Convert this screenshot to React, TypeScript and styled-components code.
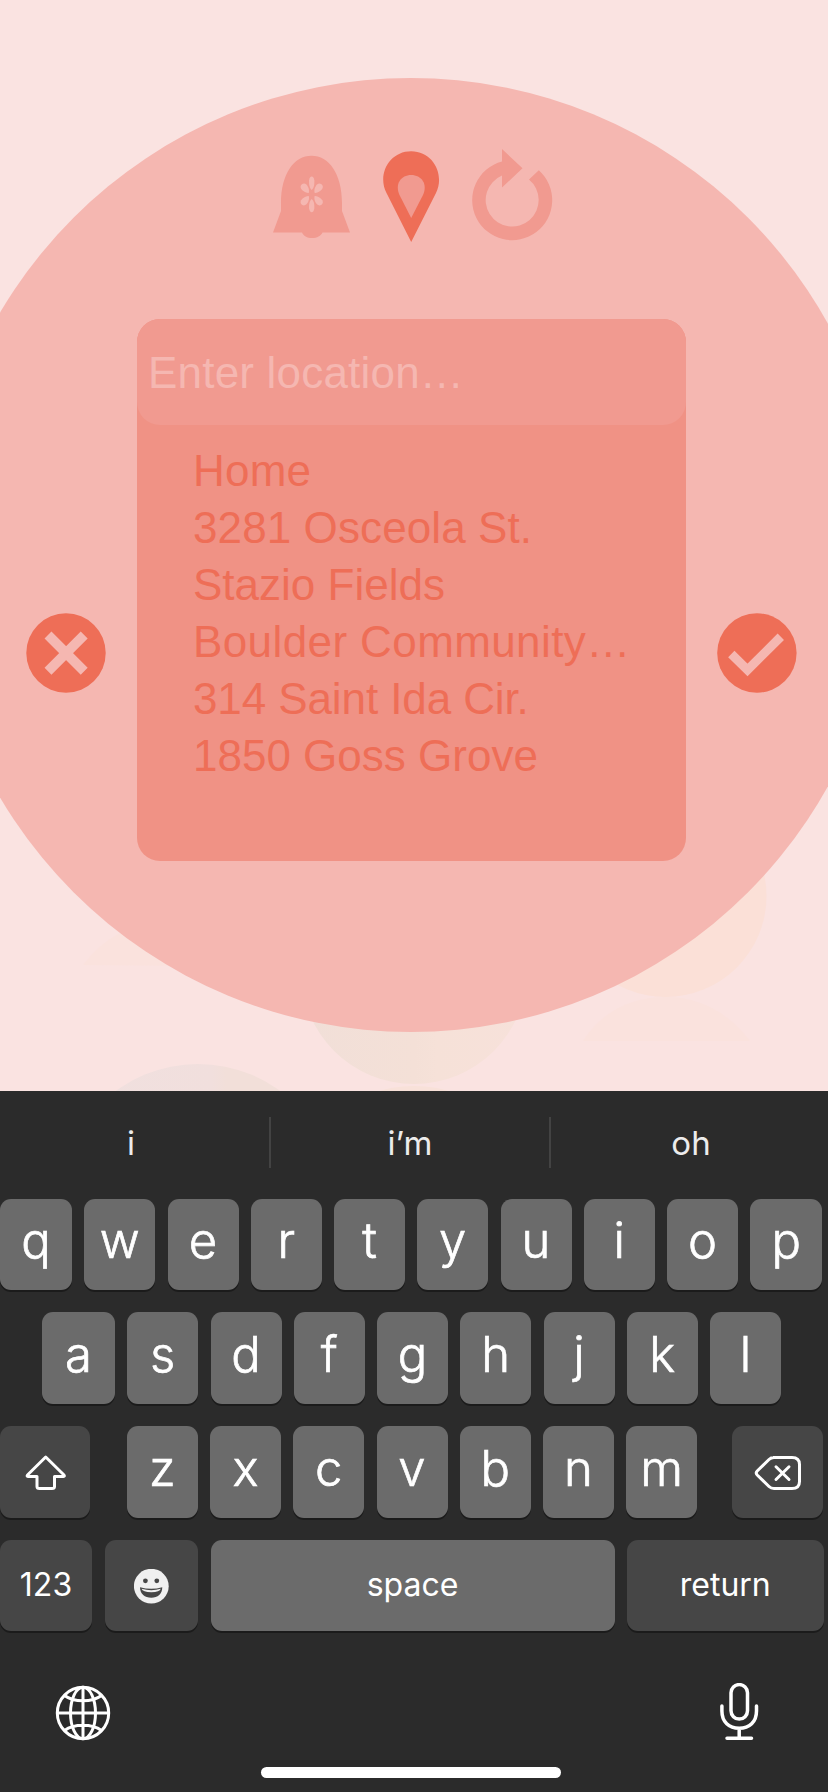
import React from "react";
import styled, { createGlobalStyle } from "styled-components";

const color = {
  blush: "#fae3e1",
  rose: "#f5b7b1",
  field: "#f19a90",
  panel: "#f09285",
  coral: "#ee6e57",
  board: "#2b2b2b",
  key: "#6b6b6b",
  darkKey: "#464646",
};

const Global = createGlobalStyle`
  * { box-sizing: border-box; }
  body { margin: 0; background: ${color.board}; }
  svg { display: block; flex: none; }
`;

const Screen = styled.div`
  width: 828px;
  height: 1792px;
  display: flex;
  flex-direction: column;
  overflow: hidden;
`;

const Stage = styled.main`
  position: relative;
  height: 1091px;
  flex: none;
  background: ${color.blush};
  isolation: isolate;
`;

const Backdrop = styled.svg`
  position: absolute;
  inset: 0;
  z-index: -1;
`;

const Modes = styled.nav`
  display: flex;
  height: 319px;
  padding: 146px 0 0 269px;
  gap: 26px;
`;

const Picker = styled.section`
  display: flex;
  align-items: flex-start;
  padding-left: 26px;
  height: 542px;
`;

const RoundButton = styled.button`
  width: 80px;
  height: 80px;
  margin-top: 294px;
  padding: 0;
  border: 0;
  background: none;
`;

const Panel = styled.div`
  width: 549px;
  height: 542px;
  margin: 0 30.5px 0 31px;
  border-radius: 23px;
  background: ${color.panel};
  font-family: "Liberation Sans", Arial, sans-serif;
  font-size: 44px;
  white-space: nowrap;
`;

const Field = styled.div`
  height: 106px;
  padding: 3px 0 0 11px;
  border-radius: 23px;
  line-height: 102px;
  letter-spacing: 0.2px;
  color: ${color.rose};
  background: ${color.field};
`;

const Places = styled.ul`
  margin: 0;
  padding: 17px 0 0 56px;
  list-style: none;
  color: ${color.coral};
`;

const Place = styled.li<{ $spacing: number }>`
  height: 57px;
  line-height: 57px;
  letter-spacing: ${(p) => p.$spacing}px;
`;

const Board = styled.section`
  height: 701px;
  flex: none;
  background: ${color.board};
  font-family: Inter, "Noto Sans", sans-serif;
  color: #fff;
`;

const Suggestions = styled.div`
  display: flex;
  align-items: center;
  height: 107.5px;
  padding: 0 0 4px;
`;

const Suggestion = styled.div<{ $width: number; $nudge?: number }>`
  width: ${(p) => p.$width}px;
  padding-left: ${(p) => Math.max(p.$nudge ?? 0, 0)}px;
  padding-right: ${(p) => Math.max(-(p.$nudge ?? 0), 0)}px;
  text-align: center;
  font-size: 33px;
  line-height: 40px;
  color: #ececec;
`;

const Divider = styled.div`
  width: 2px;
  height: 51px;
  background: #434343;
`;

const KeyRow = styled.div<{ $left: number }>`
  display: flex;
  gap: 12.25px;
  height: 91.5px;
  margin-bottom: 22.3px;
  padding-left: ${(p) => p.$left}px;
`;

const Key = styled.div<{ $width?: number; $dark?: boolean; $kind?: "word" | "icon"; $before?: number; $pull?: number }>`
  display: flex;
  flex: none;
  justify-content: center;
  align-items: center;
  width: ${(p) => p.$width ?? 71}px;
  height: 91.5px;
  margin-left: ${(p) => p.$before ?? 0}px;
  padding-left: ${(p) => p.$pull ?? 0}px;
  padding-top: ${(p) => (p.$kind === "icon" ? 2 : 0)}px;
  padding-bottom: ${(p) => (p.$kind === "icon" ? 0 : p.$kind ? 2 : 7)}px;
  border-radius: 11px;
  background: ${(p) => (p.$dark ? color.darkKey : color.key)};
  box-shadow: 0 2px 0 #1b1b1b;
  font-size: ${(p) => (p.$kind ? 32 : 49)}px;
  font-weight: ${(p) => (p.$kind ? 400 : 300)};
  -webkit-text-stroke: ${(p) => (p.$kind ? 0 : 0.7)}px #fff;
  line-height: 1;
`;

const Tools = styled.div`
  display: flex;
  justify-content: space-between;
  align-items: center;
  height: 64px;
  margin-top: 50px;
  padding: 0 67px 0 53px;
`;

const HomeBar = styled.div`
  width: 300px;
  height: 10.5px;
  margin: 22px 0 0 261px;
  border-radius: 6px;
  background: #fff;
`;

const Scenery = () => (
  <Backdrop width="828" height="1091" viewBox="0 0 828 1091">
    <defs>
      <linearGradient id="mid">
        <stop offset="0" stopColor="#f1dfd8" />
        <stop offset="0.5" stopColor="#f4e0d7" />
        <stop offset="0.6" stopColor="#f6e1d8" />
        <stop offset="1" stopColor="#f7e1da" />
      </linearGradient>
      <linearGradient id="low">
        <stop offset="0" stopColor="#f0e0df" />
        <stop offset="0.55" stopColor="#f1dfdd" />
        <stop offset="0.6" stopColor="#f2dfd9" />
        <stop offset="1" stopColor="#f2dfd9" />
      </linearGradient>
    </defs>
    <path d="M83 965 Q116 922 167 922 L200 966 Z" fill="#fae2dd" />
    <circle cx="665.5" cy="896" r="101" fill="#fbe0d7" />
    <path d="M583 1041 Q612 997 666 997 Q716 997 750 1041 Z" fill="#fae2dd" />
    <circle cx="414" cy="971" r="113" fill="url(#mid)" />
    <ellipse cx="414" cy="1110" rx="56" ry="24" fill="#f8e1d9" />
    <circle cx="198" cy="1203" r="139" fill="url(#low)" />
    <circle cx="410.8" cy="555" r="477" fill={color.rose} />
  </Backdrop>
);

const petals: [number, number, number][] = [
  [311.7, 183.3, 0],
  [311.7, 205.6, 180],
  [305.3, 188.6, -38],
  [318.1, 188.6, 38],
  [305.3, 200.3, -142],
  [318.1, 200.3, 142],
];

const Bell = () => (
  <svg width="86" height="98" viewBox="269 146 86 98">
    <path
      d="M281 203C281 174 294 155.800 311.500 155.800S342 174 342 203V211L350 232.500H322.500C321 236 317 238 312 238S303.500 236 302 232.500H273L281 211Z"
      fill={color.field}
    />
    {petals.map(([x, y, a]) => (
      <path
        key={`${x}-${y}`}
        transform={`translate(${x} ${y}) rotate(${a})`}
        d={a % 180 ? "M0 5.500C-2.500 4-3.600 0-3.400-2.500Q-2.800-5.500 0-5.500T3.400-2.500C3.600 0 2.500 4 0 5.500Z" : "M0 6.700C-2.600 4.500-2.800 0-2.600-3Q-2-6.700 0-6.700T2.600-3C2.800 0 2.600 4.500 0 6.700Z"}
        fill={color.rose}
      />
    ))}
  </svg>
);

const Pin = () => (
  <svg width="60" height="98" viewBox="381 146 60 98">
    <path d="M411.200 242L386.500 193C377 175 389 151.300 411.200 151.300S445 175 436 193Z" fill={color.coral} />
    <path d="M411.200 218L399.500 195C394.500 184 401 175 411.200 175S428 184 423 195Z" fill={color.field} />
  </svg>
);

const Repeat = () => (
  <svg width="90" height="98" viewBox="467 146 90 98">
    <path
      d="M538.800 170.300A40 40 0 1 1 502 161.500V149L522.500 168.300L502 187.500V175.600A26.500 26.500 0 1 0 529 179.600Z"
      fill={color.field}
    />
  </svg>
);

const Cross = () => (
  <svg width="80" height="80" viewBox="26 613 80 80">
    <circle cx="66" cy="653" r="39.700" fill={color.coral} />
    <path d="M48 635L84.200 671.200M84.200 635L48 671.200" stroke={color.rose} strokeWidth="9.800" />
  </svg>
);

const Check = () => (
  <svg width="80" height="80" viewBox="716.500 613 80 80">
    <circle cx="756.400" cy="653" r="39.700" fill={color.coral} />
    <path d="M730.800 654L747 670L780.300 636.700" fill="none" stroke={color.rose} strokeWidth="9" />
  </svg>
);

const Shift = () => (
  <svg width="42" height="38" viewBox="25 1454 42 38">
    <path
      d="M45.700 1457L64 1475Q65 1476.500 63.500 1476.500H54.500V1486.500Q54.500 1488.600 52 1488.600H39.500Q37 1488.600 37 1486.500V1476.500H28Q26.500 1476.500 27.500 1475Z"
      fill="none"
      stroke="#fff"
      strokeWidth="3"
      strokeLinejoin="round"
    />
  </svg>
);

const Backspace = () => (
  <svg width="48" height="36" viewBox="754 1455 48 36">
    <path
      d="M773 1457.500H792Q799.500 1457.500 799.500 1464.500V1481.500Q799.500 1488.500 792 1488.500H774Q771 1488.500 769 1486.500L757.200 1475Q755.300 1473 757.200 1471L769 1459.500Q771 1457.500 774 1457.500Z"
      fill="none"
      stroke="#fff"
      strokeWidth="3"
    />
    <path d="M776 1466.800L789 1479.500M789 1466.800L776 1479.500" stroke="#fff" strokeWidth="3" strokeLinecap="round" />
  </svg>
);

const Smile = () => (
  <svg width="36" height="36" viewBox="-17.300 -17.200 36 36">
    <circle r="17.400" fill="#f0f0f0" />
    <circle cx="-5.900" cy="-5.400" r="2.400" fill={color.darkKey} />
    <circle cx="5.500" cy="-5.400" r="2.400" fill={color.darkKey} />
    <path d="M-11.300 1Q0 4 11 1C11 7.500 6.500 11.500 0 11.500S-11.300 7.500-11.300 1Z" fill={color.darkKey} />
    <path d="M-9.800 2.600Q0 5.500 9.500 2.600Q8.500 6 0 6T-9.800 2.600Z" fill="#f0f0f0" />
  </svg>
);

const Globe = () => (
  <svg width="60" height="60" viewBox="-30 -30 60 60" fill="none" stroke="#fff" strokeWidth="3">
    <circle r="25.700" />
    <ellipse rx="12.500" ry="25.700" />
    <path d="M0-26V26M-26 0H26M-18.500-17.500C-9-10.500 9-10.500 18.500-17.500M-18.500 17.500C-9 10.500 9 10.500 18.500 17.500" />
  </svg>
);

const Mic = () => (
  <svg width="44" height="60" viewBox="717 1682 44 60" fill="none" stroke="#fff" strokeWidth="3.500" strokeLinecap="round">
    <rect x="731" y="1683.600" width="16.500" height="34.500" rx="8.250" />
    <path d="M721.900 1705V1710C721.900 1721 729 1727.300 739.200 1727.300S756.500 1721 756.500 1710V1705M739.200 1728V1737M727 1737.200H751.500" />
  </svg>
);

const places: [string, number][] = [
  ["Home", 0.2],
  ["3281 Osceola St.", 0.1],
  ["Stazio Fields", 0],
  ["Boulder Community…", 0.4],
  ["314 Saint Ida Cir.", -0.1],
  ["1850 Goss Grove", 0],
];

export default function App() {
  return (
    <Screen>
      <Global />
      <Stage>
        <Scenery />
        <Modes>
          <Bell />
          <Pin />
          <Repeat />
        </Modes>
        <Picker>
          <RoundButton aria-label="Cancel"><Cross /></RoundButton>
          <Panel>
            <Field>Enter location…</Field>
            <Places>
              {places.map(([name, spacing]) => (
                <Place key={name} $spacing={spacing}>{name}</Place>
              ))}
            </Places>
          </Panel>
          <RoundButton aria-label="Confirm"><Check /></RoundButton>
        </Picker>
      </Stage>
      <Board>
        <Suggestions>
          <Suggestion $width={269} $nudge={-7}>i</Suggestion>
          <Divider />
          <Suggestion $width={278}>i’m</Suggestion>
          <Divider />
          <Suggestion $width={277} $nudge={3}>oh</Suggestion>
        </Suggestions>
        <KeyRow $left={0}>
          {[..."qwertyuiop"].map((c, i) => (
            <Key key={c} $width={i === 0 || i === 9 ? 72 : 71}>{c}</Key>
          ))}
        </KeyRow>
        <KeyRow $left={42}>
          {[..."asdfghjkl"].map((c, i) => (
            <Key key={c} $width={i === 0 ? 73 : 71}>{c}</Key>
          ))}
        </KeyRow>
        <KeyRow $left={0}>
          <Key $width={90} $dark $kind="icon" $pull={2}><Shift /></Key>
          {[..."zxcvbnm"].map((c, i) => (
            <Key key={c} $before={i === 0 ? 24.5 : 0}>{c}</Key>
          ))}
          <Key $width={91} $dark $kind="icon" $before={22.5} $pull={1}><Backspace /></Key>
        </KeyRow>
        <KeyRow $left={0}>
          <Key $width={92} $dark $kind="word">123</Key>
          <Key $width={93} $dark $kind="icon" $before={1}><Smile /></Key>
          <Key $width={404} $kind="word">space</Key>
          <Key $width={197} $dark $kind="word">return</Key>
        </KeyRow>
        <Tools>
          <Globe />
          <Mic />
        </Tools>
        <HomeBar />
      </Board>
    </Screen>
  );
}
